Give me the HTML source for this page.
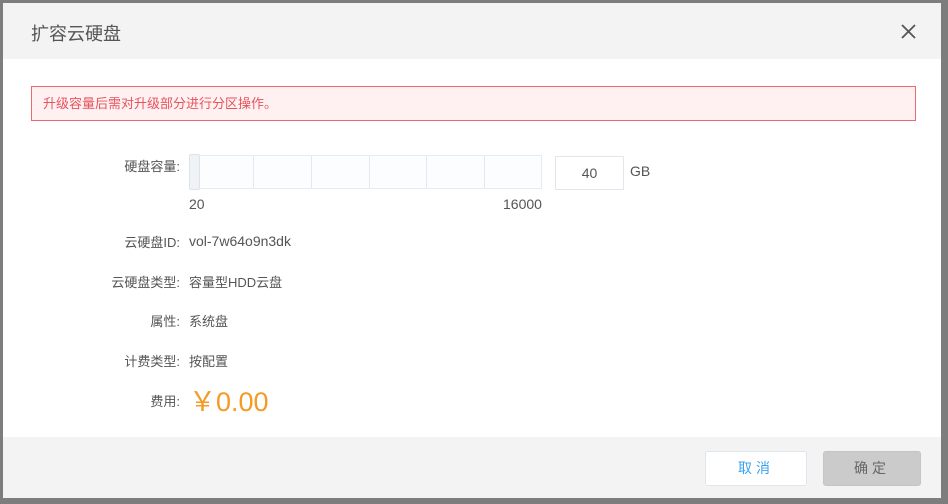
<!DOCTYPE html><html><head><meta charset="utf-8"><style>
body{margin:0;width:948px;height:504px;background:#7d7d7d;position:relative;overflow:hidden;font-family:"Liberation Sans","Noto Sans CJK SC",sans-serif;}
.m{position:absolute;left:3px;top:3px;width:938px;height:495px;background:#fff;}
.h{position:absolute;left:0;top:0;width:938px;height:56px;background:#f3f3f3;}
.t{position:absolute;left:28px;top:17px;font-size:18px;color:#555;}
.f{position:absolute;left:0;top:434px;width:938px;height:61px;background:#f3f3f3;}
.a{position:absolute;left:28px;top:83px;width:872px;height:33px;border:1px solid #e96a6f;background:#fff0f2;color:#e5545b;font-size:13px;line-height:33px;padding-left:11px;}
.l{position:absolute;font-size:13px;color:#555;text-align:right;width:120px;left:57px;}
.v{position:absolute;font-size:13px;color:#555;left:186px;}
.s{position:absolute;left:186px;top:152px;width:353px;height:34px;background:#fcfdfe;border:1px solid #e6ebf0;box-sizing:border-box;}
.s i{position:absolute;top:0;width:1px;height:32px;background:#e3e9ef;}
.hd{position:absolute;left:186px;top:151px;width:11px;height:36px;background:#f0f3f6;border:1px solid #dde3e9;box-sizing:border-box;border-radius:2px;}
.in{position:absolute;left:552px;top:153px;width:69px;height:34px;border:1px solid #e3e7eb;box-sizing:border-box;font-size:14px;color:#555;text-align:center;line-height:32px;}
.b{position:absolute;top:448px;height:35px;box-sizing:border-box;border-radius:3px;font-size:14px;text-align:center;line-height:33px;letter-spacing:4px;}
</style></head><body>
<div class="m">
<div class="h"><div class="t">扩容云硬盘</div>
<svg style="position:absolute;left:898px;top:21px" width="15" height="15"><path d="M1 1L14 14M14 1L1 14" stroke="#555" stroke-width="1.8"/></svg></div>
<div class="a">升级容量后需对升级部分进行分区操作。</div>
<div class="l" style="top:153px">硬盘容量:</div>
<div class="s"><i style="left:63px"></i><i style="left:121px"></i><i style="left:179px"></i><i style="left:236px"></i><i style="left:294px"></i></div>
<div class="hd"></div>
<div class="in">40</div>
<div class="v" style="left:627px;top:160px;font-size:14px">GB</div>
<div class="v" style="top:193px;font-size:14px">20</div>
<div class="v" style="left:500px;top:193px;font-size:14px">16000</div>
<div class="l" style="top:229px">云硬盘ID:</div><div class="v" style="top:230px;font-size:14px">vol-7w64o9n3dk</div>
<div class="l" style="top:269px">云硬盘类型:</div><div class="v" style="top:269px">容量型HDD云盘</div>
<div class="l" style="top:308px">属性:</div><div class="v" style="top:308px">系统盘</div>
<div class="l" style="top:348px">计费类型:</div><div class="v" style="top:348px">按配置</div>
<div class="l" style="top:388px">费用:</div><div class="v" style="top:377px;font-size:27px;color:#f59a23">￥0.00</div>
<div class="f"></div>
<div class="b" style="left:702px;width:102px;background:#fff;border:1px solid #dfe6ee;color:#3aa3f0">取消</div>
<div class="b" style="left:820px;width:98px;background:#cbcbcb;border:1px solid #c4c4c4;color:#666">确定</div>
</div>
</body></html>
